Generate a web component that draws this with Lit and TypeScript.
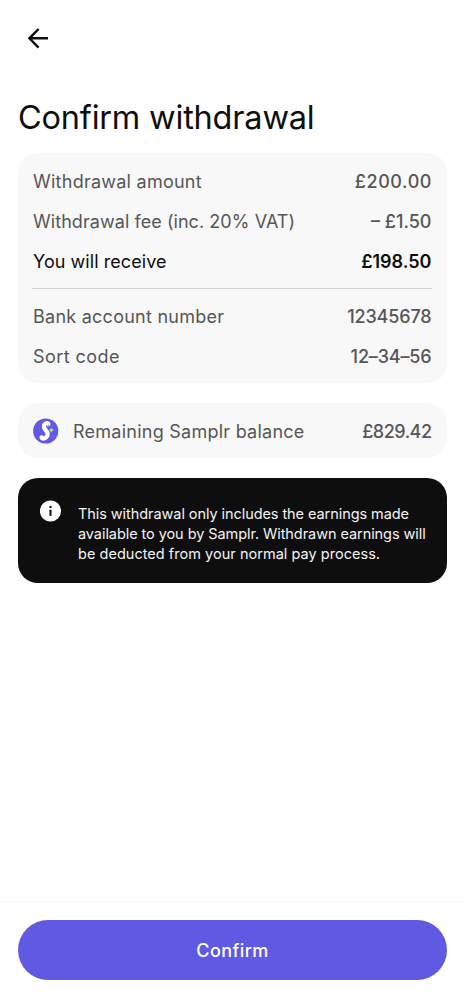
import { LitElement, html, css } from "lit";
import { customElement } from "lit/decorators.js";

@customElement("app-root")
export class AppRoot extends LitElement {
  static styles = css`
    :host {
      display: flex;
      flex-direction: column;
      box-sizing: border-box;
      height: 1000px;
      background: #fff;
      color: #0e0e0e;
      font-family: Inter, "Liberation Sans", sans-serif;
      font-size: 18px;
      line-height: 24px;
    }
    main { flex: 1; padding: 18px 17px 0 18px; }
    .back { display: block; width: 40px; height: 40px; padding: 0; border: 0; background: none; }
    svg { display: block; flex: none; }
    h1 { margin: 40px 0 0; height: 55px; font-size: 32.5px; line-height: 40px; font-weight: 400; letter-spacing: -0.2px; white-space: nowrap; }
    .card { box-sizing: border-box; background: #f8f8f8; border-radius: 20px; color: #565656; }
    .details { height: 230px; padding: 9px 15.5px 6px 15px; }
    .row { display: flex; align-items: center; justify-content: space-between; height: 40px; white-space: nowrap; }
    .value { font-weight: 500; }
    .strong { color: #0e0e0e; }
    .strong .value { font-weight: 600; }
    .rule { height: 1px; margin: 6px -0.5px 8px -1px; background: #d2d2d0; }
    .balance { display: flex; align-items: center; height: 55px; margin-top: 20px; padding: 2px 15.5px 0 15px; white-space: nowrap; }
    .balance svg { margin-top: -2px; }
    .balance .label { flex: 1; margin-left: 14px; }
    .notice { display: flex; box-sizing: border-box; height: 105px; margin-top: 20px; padding: 22px; border-radius: 20px; background: #0e0e0e; color: #f4f4f4; }
    .notice p { margin: 4px 0 0 16px; font-size: 14.5px; line-height: 20px; letter-spacing: -0.07px; white-space: nowrap; }
    footer { box-sizing: border-box; height: 99px; padding: 18.4px 17px 0 18px; border-top: 1px solid #f6f6f6; }
    .confirm { display: block; box-sizing: border-box; width: 100%; height: 60px; padding: 1px 0 0; border: 0; border-radius: 30px; background: #6059e1; color: #fff; font: inherit; font-weight: 500; letter-spacing: 0.4px; }
    .loose { letter-spacing: 0.25px; }
    .looser { letter-spacing: 0.45px; }
    .slight { letter-spacing: 0.06px; }
    .wide { letter-spacing: 0.6px; margin-right: -0.6px; }
    .snug { letter-spacing: -0.15px; }
    .tight { letter-spacing: -0.5px; }
    .even { letter-spacing: 0.03px; }
  `;

  render() {
    return html`
      <main>
        <button class="back" aria-label="Back">
          <svg width="40" height="40" viewBox="0 0 40 40" fill="none" stroke="#0e0e0e" stroke-width="2.4"><path d="M30 20.3H11.5M20.6 11L11.4 20.3L20.6 29.6" /></svg>
        </button>
        <h1>Confirm withdrawal</h1>
        <section class="card details">
          <div class="row"><span class="loose">Withdrawal amount</span><span class="value wide">£200.00</span></div>
          <div class="row"><span class="slight">Withdrawal fee (inc. 20% VAT)</span><span class="value">– £1.50</span></div>
          <div class="row strong"><span class="slight">You will receive</span><span class="value">£198.50</span></div>
          <div class="rule"></div>
          <div class="row"><span class="loose">Bank account number</span><span class="value snug">12345678</span></div>
          <div class="row"><span class="looser">Sort code</span><span class="value snug">12–34–56</span></div>
        </section>
        <section class="card balance">
          <svg width="26" height="26" viewBox="0 0 26 26">
            <circle cx="12.7" cy="13" r="12.6" fill="#6059e1" />
            <path d="M15.4 6.2C14.6 4.6 11.2 5 10.9 8.4C10.8 11.8 15.2 13 14.6 16.5C14 20.4 9.2 21.6 8.6 19.4" fill="none" stroke="#fff" stroke-width="4.3" stroke-linecap="round" stroke-linejoin="round" />
            <circle cx="15.2" cy="7.4" r="0.7" fill="#6059e1" />
            <path d="M18.3 10L19 11.4L20.4 12.1L19 12.8L18.3 14.2L17.6 12.8L16.2 12.1L17.6 11.4Z" fill="#c9e85a" stroke="#c9e85a" stroke-width="0.6" />
          </svg>
          <span class="label loose">Remaining Samplr balance</span><span class="value tight">£829.42</span>
        </section>
        <section class="notice">
          <svg width="22" height="22" viewBox="0 0 22 22">
            <circle cx="10.5" cy="11" r="10.6" fill="#fff" />
            <circle cx="10.5" cy="6.9" r="1.2" fill="#0e0e0e" />
            <rect x="9.5" y="9.7" width="2" height="6.2" rx="0.6" fill="#0e0e0e" />
          </svg>
          <p>This withdrawal only includes the earnings made<br />available to you by Samplr. Withdrawn earnings will<br /><span class="even">be deducted from your normal pay process.</span></p>
        </section>
      </main>
      <footer><button class="confirm">Confirm</button></footer>
    `;
  }
}
